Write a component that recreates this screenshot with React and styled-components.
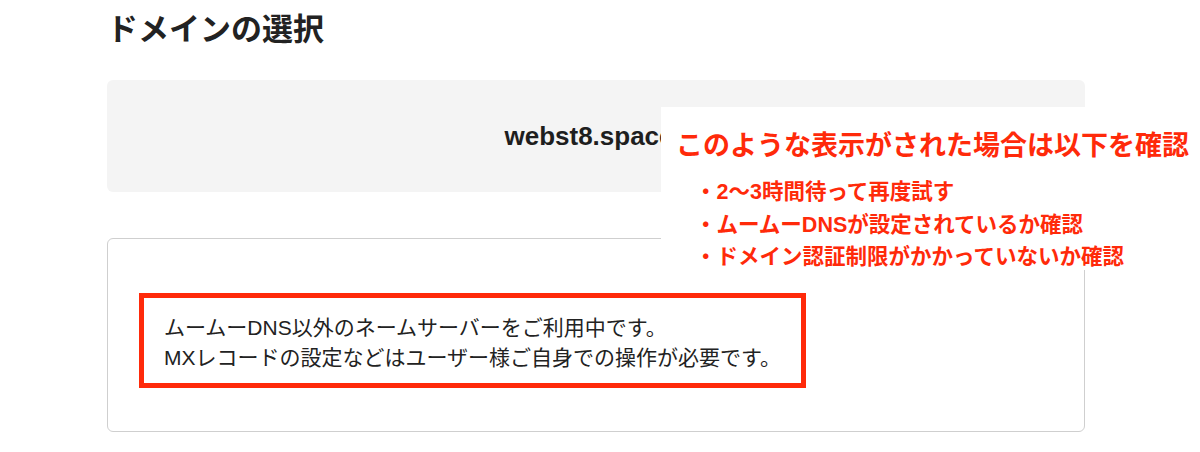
import React from 'react';
import styled, { createGlobalStyle } from 'styled-components';

const GlobalStyle = createGlobalStyle`
  html, body {
    margin: 0;
    padding: 0;
    background: #fff;
  }
  body {
    font-family: "Liberation Sans", "Noto Sans CJK JP", sans-serif;
    color: #222;
  }
`;

const Page = styled.div`
  position: relative;
  width: 1200px;
  height: 452px;
  overflow: hidden;
  padding: 0 115px 0 107px;
  box-sizing: border-box;
`;

const Title = styled.h2`
  margin: 0;
  padding-top: 12px;
  height: 80px;
  box-sizing: border-box;
  font-size: 31px;
  font-weight: bold;
  line-height: 36px;
  color: #222;
`;

const DomainBox = styled.div`
  height: 112px;
  background: #f4f4f4;
  border-radius: 6px;
  display: flex;
  align-items: center;
  justify-content: center;
  font-size: 26px;
  font-weight: bold;
  color: #1e1e1e;
  padding-right: 14px;
`;

const ResultCard = styled.div`
  margin-top: 46px;
  height: 194px;
  box-sizing: border-box;
  border: 1px solid #cfcfcf;
  border-radius: 6px;
  padding: 54px 0 0 31px;
`;

const Highlight = styled.div`
  width: 667px;
  height: 95px;
  box-sizing: border-box;
  border: 5px solid #ff2a0a;
  padding: 15px 0 0 20px;
  font-size: 21px;
  line-height: 30px;
  color: #222;
`;

const Note = styled.div`
  position: absolute;
  left: 661px;
  top: 107px;
  width: 539px;
  height: 163px;
  background: #fff;
  padding: 23px 0 0 15px;
  box-sizing: border-box;
  color: #ff2a0a;
  font-weight: bold;
`;

const NoteTitle = styled.div`
  font-size: 27px;
  line-height: 32px;
  margin-bottom: 14px;
`;

const NoteList = styled.ul`
  list-style: none;
  margin: 0;
  padding: 0 0 0 19px;
  font-size: 21.5px;
  line-height: 32.5px;
`;

function App() {
  return (
    <>
      <GlobalStyle />
      <Page>
        <Title>ドメインの選択</Title>
        <DomainBox>webst8.space</DomainBox>
        <ResultCard>
          <Highlight>
            ムームーDNS以外のネームサーバーをご利用中です。
            <br />
            MXレコードの設定などはユーザー様ご自身での操作が必要です。
          </Highlight>
        </ResultCard>
        <Note>
          <NoteTitle>このような表示がされた場合は以下を確認</NoteTitle>
          <NoteList>
            <li>・2〜3時間待って再度試す</li>
            <li>・ムームーDNSが設定されているか確認</li>
            <li>・ドメイン認証制限がかかっていないか確認</li>
          </NoteList>
        </Note>
      </Page>
    </>
  );
}

export default App;
